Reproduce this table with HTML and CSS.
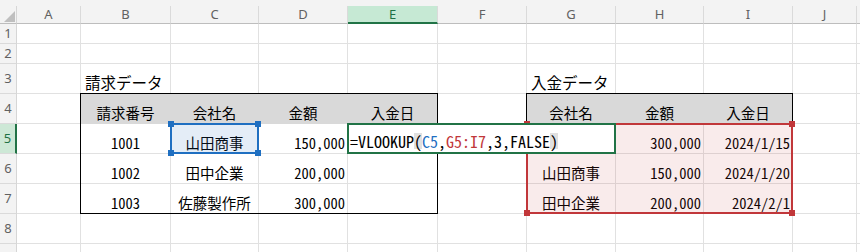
FILE: index.html
```html
<!DOCTYPE html>
<html lang="ja">
<head>
<meta charset="utf-8">
<link rel="stylesheet" href="styles.css">
</head>
<body>
<div class="wrap">
<div class="sheet">
  <div class="strip"></div>

  <div class="corner"><svg width="17" height="18" viewBox="0 0 17 18"><polygon points="4,16 15,16 15,5" fill="#bfbfbf"/></svg></div>
  <div class="ch">A</div><div class="ch">B</div><div class="ch">C</div><div class="ch">D</div><div class="ch sel">E</div><div class="ch">F</div><div class="ch">G</div><div class="ch">H</div><div class="ch">I</div><div class="ch">J</div><div class="ch"></div>

  <div class="rh">1</div><div class="c"></div><div class="c"></div><div class="c"></div><div class="c"></div><div class="c"></div><div class="c"></div><div class="c"></div><div class="c"></div><div class="c"></div><div class="c"></div><div class="c"></div>

  <div class="rh">2</div><div class="c"></div><div class="c"></div><div class="c"></div><div class="c"></div><div class="c"></div><div class="c"></div><div class="c"></div><div class="c"></div><div class="c"></div><div class="c"></div><div class="c"></div>

  <div class="rh">3</div><div class="c"></div><div class="c l title">請求データ</div><div class="c"></div><div class="c"></div><div class="c"></div><div class="c"></div><div class="c l title">入金データ</div><div class="c"></div><div class="c"></div><div class="c"></div><div class="c"></div>

  <div class="rh">4</div><div class="c"></div><div class="c hd">請求番号</div><div class="c hd">会社名</div><div class="c hd">金額</div><div class="c hd">入金日</div><div class="c"></div><div class="c hd">会社名</div><div class="c hd">金額</div><div class="c hd">入金日</div><div class="c"></div><div class="c"></div>

  <div class="rh sel">5</div><div class="c"></div><div class="c">1001</div><div class="c">山田商事</div><div class="c r">150,000</div><div class="c"></div><div class="c"></div><div class="c"></div><div class="c r">300,000</div><div class="c r">2024/1/15</div><div class="c"></div><div class="c"></div>

  <div class="rh">6</div><div class="c"></div><div class="c">1002</div><div class="c">田中企業</div><div class="c r">200,000</div><div class="c"></div><div class="c"></div><div class="c">山田商事</div><div class="c r">150,000</div><div class="c r">2024/1/20</div><div class="c"></div><div class="c"></div>

  <div class="rh">7</div><div class="c"></div><div class="c">1003</div><div class="c">佐藤製作所</div><div class="c r">300,000</div><div class="c"></div><div class="c"></div><div class="c">田中企業</div><div class="c r">200,000</div><div class="c r">2024/2/1</div><div class="c"></div><div class="c"></div>

  <div class="rh">8</div><div class="c"></div><div class="c"></div><div class="c"></div><div class="c"></div><div class="c"></div><div class="c"></div><div class="c"></div><div class="c"></div><div class="c"></div><div class="c"></div><div class="c"></div>

  <div class="rh"></div><div class="c"></div><div class="c"></div><div class="c"></div><div class="c"></div><div class="c"></div><div class="c"></div><div class="c"></div><div class="c"></div><div class="c"></div><div class="c"></div><div class="c"></div>
</div>

<div class="sheet overlay">
  <div class="tbl tbl-left"></div>
  <div class="tbl tbl-right"></div>
  <div class="refblue"><i class="h tl"></i><i class="h tr"></i><i class="h bl"></i><i class="h br"></i></div>
  <div class="refred"><i class="h tl"></i><i class="h tr"></i><i class="h bl"></i><i class="h br"></i></div>
  <div class="fx">=VLOOKUP<span class="pm">(</span><span class="fb">C5</span>,<span class="fr">G5:I7</span>,3,FALSE<span class="pm">)</span></div>
</div>
</div>
</body>
</html>
```
FILE: styles.css
```css
* { box-sizing: border-box; margin: 0; padding: 0; }
html, body { width: 860px; height: 252px; overflow: hidden; background: #fff; }
body { font-family: "Noto Sans Mono CJK JP", "Noto Sans CJK JP", sans-serif; color: #000; }

.wrap { display: grid; width: 860px; height: 252px; overflow: hidden; }
.wrap > .sheet { grid-area: 1 / 1; }

.sheet {
  display: grid;
  grid-template-columns: 17px 64px 90px 88px 89px 90px 89px 89px 88px 89px 64px 1fr;
  grid-template-rows: 6px 18px 20px 20px 30px 30px 30px 30px 30px 30px 30px;
  width: 860px;
}
.overlay { pointer-events: none; }

.strip { grid-column: 1 / -1; background: #f3f3f3; }

.corner {
  background: #f3f3f3;
  border-right: 1px solid #d6d6d6;
  border-bottom: 1px solid #bdbdbd;
}
.corner svg { display: block; }

.ch {
  background: #f3f3f3;
  border-right: 1px solid #dadada;
  border-bottom: 1px solid #bdbdbd;
  font-family: "Noto Sans", sans-serif;
  font-size: 13px;
  color: #616161;
  display: flex;
  align-items: center;
  justify-content: center;
  line-height: 1;
}
.ch.sel { background: #c6e9d4; border-bottom: 2px solid #217346; color: #1e7145; }

.rh {
  background: #f3f3f3;
  border-right: 1px solid #d6d6d6;
  border-bottom: 1px solid #dadada;
  font-family: "Noto Sans", sans-serif;
  font-size: 13px;
  color: #616161;
  display: flex;
  align-items: center;
  justify-content: center;
  line-height: 1;
}
.rh.sel { background: #cde8d6; border-right: 2px solid #217346; color: #1e7145; }

.c {
  border-right: 1px solid #e1e1e1;
  border-bottom: 1px solid #e1e1e1;
  display: flex;
  align-items: flex-end;
  justify-content: center;
  font-size: 14.5px;
  line-height: 1;
  padding: 0 2px 3px 2px;
  white-space: nowrap;
  min-width: 0;
}
.l { justify-content: flex-start; padding-left: 4px; }
.r { justify-content: flex-end; }
.title { font-size: 15.5px; }
.hd { background: #d9d9d9; border-color: #d9d9d9; }

.tbl {
  grid-row: 6 / 10;
  border: 1px solid #000;
  margin: -1px 0 0 -1px;
}
.tbl-left { grid-column: 3 / 7; }
.tbl-right { grid-column: 8 / 11; }

.refblue {
  grid-row: 7 / 8;
  grid-column: 4 / 5;
  margin: -1px 0 0 -1px;
  border: 2px solid #1f6fc1;
  background: rgba(31, 111, 193, 0.12);
  position: relative;
}
.refred {
  grid-row: 7 / 10;
  grid-column: 8 / 11;
  margin: -1px 0 0 -1px;
  border: 2px solid #c1373a;
  background: rgba(193, 55, 58, 0.10);
  position: relative;
}
.h { position: absolute; width: 6px; height: 6px; display: block; }
.refblue .h { background: #1f6fc1; }
.refred .h { background: #c1373a; }
.h.tl { top: -4px; left: -4px; }
.h.tr { top: -4px; right: -4px; }
.h.bl { bottom: -4px; left: -4px; }
.h.br { bottom: -4px; right: -4px; }

.fx {
  grid-row: 7 / 8;
  grid-column: 6 / 9;
  margin: -1px 0 0 -1px;
  border: 2px solid #217346;
  background: #fff;
  position: relative;
  font-size: 16px;
  line-height: 1;
  display: flex;
  align-items: flex-end;
  padding: 0 0 3px 1px;
  white-space: pre;
}
.pm { background: #e0e0e0; }
.fb { color: #1f6fc1; }
.fr { color: #c1373a; }
```
